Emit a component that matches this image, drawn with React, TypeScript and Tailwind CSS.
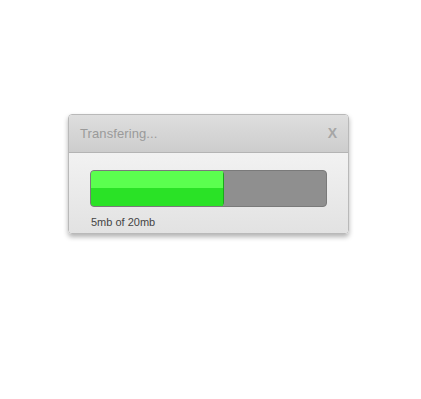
import React from 'react';

export default function App() {
    // bar width in px is 237, fill shown in the shot is about 133px
    const fill = 133;

    return (
        <div className="w-[421px] h-[399px] bg-white relative" style={{ fontFamily: '"Liberation Sans", Arial, sans-serif' }}>
            <div className="pt-[114px] pl-[68px]">
                {/* dialog */}
                <div className="w-[281px] rounded-[4px] border border-[#b9b9b9] overflow-hidden shadow-[0_3px_5px_rgba(0,0,0,0.3)]">
                    <div className="h-[38px] flex items-center justify-between pl-[11px] pr-[11px] bg-gradient-to-b from-[#dedede] to-[#cdcdcd] border-b border-[#b4b4b4]">
                        <span className="text-[13px] text-[#9a9a9a] tracking-[0.1px]">Transfering...</span>
                        <span className="text-[14px] font-bold text-[#a6a6a6]">X</span>
                    </div>
                    <div className="h-[80px] bg-gradient-to-b from-[#f2f2f2] to-[#e2e2e2] pt-[17px] pl-[21px]">
                        <div className="w-[237px] h-[37px] rounded-[4px] bg-[#8f8f8f] border border-[#7a7a7a] overflow-hidden flex">
                            <div className="h-full flex flex-col rounded-[4px] border-r border-[#1aa81a]" style={{ width: `${fill}px` }}>
                                <div className="h-[17px] bg-[#5bff4f]" />
                                <div className="flex-1 bg-[#2ae226]" />
                            </div>
                        </div>
                        <div className="mt-[7px] ml-[1px] text-[11px] text-[#444]">5mb of 20mb</div>
                    </div>
                </div>
            </div>
        </div>
    );
}
